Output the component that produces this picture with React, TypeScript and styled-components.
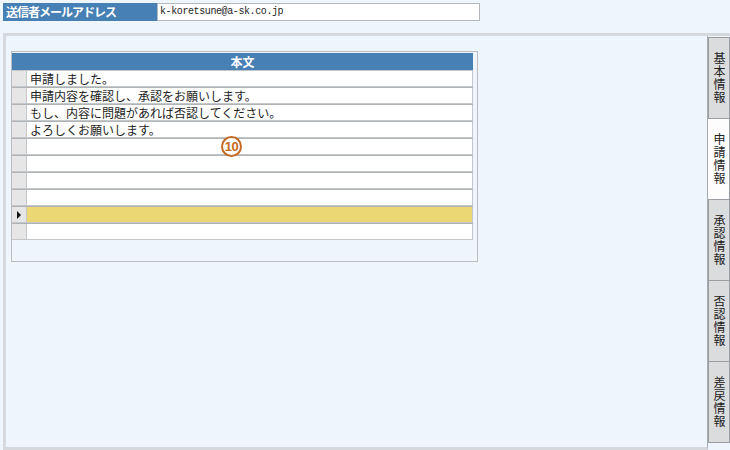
import React from 'react';
import styled, { createGlobalStyle } from 'styled-components';

const GlobalStyle = createGlobalStyle`
  body {
    margin: 0;
    background: #eef5fd;
    font-family: "Noto Sans CJK JP", "Liberation Sans", sans-serif;
    font-size: 12px;
    color: #1e1e1e;
  }
`;

const Page = styled.div`
  width: 730px;
  height: 450px;
  display: flex;
  flex-direction: column;
  overflow: hidden;
`;

const SenderRow = styled.div`
  display: flex;
  padding: 3px 0 0 3px;
  height: 18px;
`;

const FieldLabel = styled.div`
  width: 154px;
  height: 18px;
  background: #4680b4;
  color: #fff;
  font-weight: bold;
  font-size: 12px;
  letter-spacing: -1px;
  line-height: 18px;
  padding-left: 3px;
  box-sizing: border-box;
`;

const FieldValue = styled.div`
  width: 323px;
  height: 18px;
  background: #fff;
  border: 1px solid #b4b8bc;
  box-sizing: border-box;
  padding-left: 2px;
  line-height: 16px;
  font-family: "Liberation Mono", "Noto Sans CJK JP", monospace;
  font-size: 10px;
  letter-spacing: -0.4px;
`;

const Body = styled.div`
  margin-top: 12px;
  margin-left: 3px;
  flex: 1;
  display: flex;
  border-top: 3px solid #d5d9dd;
`;

const Content = styled.div`
  flex: 1;
  border-left: 3px solid #d5d9dd;
  border-bottom: 3px solid #d5d9dd;
  border-right: 1px solid #a9adb1;
  padding: 15px 0 0 5px;
`;

const TableFrame = styled.div`
  position: relative;
  width: 467px;
  height: 211px;
  box-sizing: border-box;
  border: 1px solid #b9bdc1;
  padding: 1px 4px 0 0;
`;

const HeaderCell = styled.div`
  height: 17px;
  background: #4680b4;
  color: #fff;
  font-weight: bold;
  text-align: center;
  line-height: 17px;
  font-size: 12px;
`;

const Row = styled.div`
  display: flex;
  height: 17px;
  box-sizing: border-box;
  border-top: 1px solid #c4c7ca;
  border-bottom: 1px solid #c4c7ca;
  & + & {
    border-top: 1px solid #b0b3b6;
  }
`;

const Selector = styled.div`
  width: 14px;
  background: #e6e6e6;
  border-right: 1px solid #c4c7ca;
  display: flex;
  align-items: center;
  justify-content: center;
`;

const Cell = styled.div<{ $active?: boolean }>`
  flex: 1;
  background: ${(p) => (p.$active ? '#ebd773' : '#fff')};
  border-right: 1px solid #c4c7ca;
  padding-left: 3px;
  line-height: 15px;
  font-size: 12px;
  white-space: nowrap;
`;

const Marker = styled.div`
  width: 0;
  height: 0;
  border-top: 4px solid transparent;
  border-bottom: 4px solid transparent;
  border-left: 4px solid #111;
`;

const Badge = styled.div`
  position: absolute;
  left: 209px;
  top: 84px;
  width: 21px;
  height: 21px;
  border: 2px solid #c66a22;
  border-radius: 50%;
  box-sizing: border-box;
  color: #c66a22;
  font-family: "Liberation Sans", sans-serif;
  font-weight: bold;
  font-size: 13px;
  line-height: 17px;
  text-align: center;
  background: #fff;
  letter-spacing: -0.5px;
`;

const Tabs = styled.div`
  width: 22px;
  display: flex;
  flex-direction: column;
  padding-top: 2px;
`;

const Tab = styled.div<{ $selected?: boolean }>`
  height: 82px;
  box-sizing: border-box;
  background: ${(p) => (p.$selected ? '#fdfdfd' : '#dadcde')};
  border: 1px solid #9a9ea2;
  border-left: ${(p) => (p.$selected ? 'none' : '1px solid #9a9ea2')};
  margin-top: -1px;
  writing-mode: vertical-rl;
  text-orientation: upright;
  font-size: 12px;
  letter-spacing: 1px;
  line-height: 20px;
  padding-top: 14px;
  color: #222;
`;

const lines = [
  '申請しました。',
  '申請内容を確認し、承認をお願いします。',
  'もし、内容に問題があれば否認してください。',
  'よろしくお願いします。',
  '',
  '',
  '',
  '',
  '',
  '',
];

const tabs = ['基本情報', '申請情報', '承認情報', '否認情報', '差戻情報'];

export default function App() {
  return (
    <Page>
      <GlobalStyle />
      <SenderRow>
        <FieldLabel>送信者メールアドレス</FieldLabel>
        <FieldValue>k-koretsune@a-sk.co.jp</FieldValue>
      </SenderRow>
      <Body>
        <Content>
          <TableFrame>
            <HeaderCell>本文</HeaderCell>
            {lines.map((text, i) => (
              <Row key={i}>
                <Selector>{i === 8 && <Marker />}</Selector>
                <Cell $active={i === 8}>{text}</Cell>
              </Row>
            ))}
            <Badge>10</Badge>
          </TableFrame>
        </Content>
        <Tabs>
          {tabs.map((t, i) => (
            <Tab key={t} $selected={i === 1}>
              {t}
            </Tab>
          ))}
        </Tabs>
      </Body>
    </Page>
  );
}
